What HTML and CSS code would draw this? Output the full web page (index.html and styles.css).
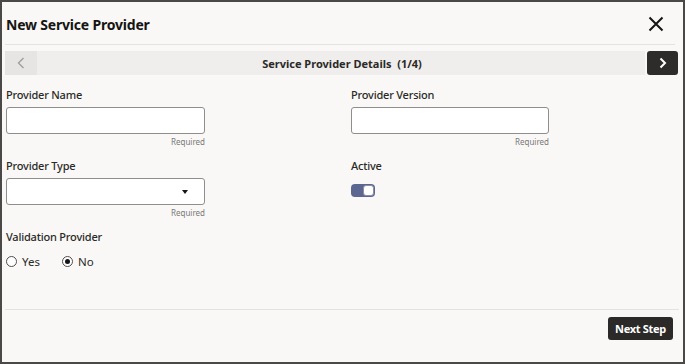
FILE: index.html
```html
<!DOCTYPE html>
<html>
<head>
<meta charset="utf-8">
<title>New Service Provider</title>
<link rel="stylesheet" href="styles.css">
</head>
<body>
<div class="dialog">
	<div class="header">
		<h1 class="title">New Service Provider</h1>
		<a class="close" href="javascript:;">
			<svg width="16" height="16" viewBox="0 0 16 16"><path d="M1.5 1.5L14.5 14.5M14.5 1.5L1.5 14.5" stroke="#161513" stroke-width="2" fill="none"/></svg>
		</a>
	</div>
	<div class="train">
		<div class="bar">
			<a class="prev" href="javascript:;">
				<svg width="8" height="12" viewBox="0 0 8 12"><path d="M6.5 1L1.5 6L6.5 11" stroke="#a09f9d" stroke-width="1.4" fill="none"/></svg>
			</a>
			<div class="step">Service Provider Details&nbsp; (1/4)</div>
		</div>
		<a class="next" href="javascript:;">
			<svg width="8" height="12" viewBox="0 0 8 12"><path d="M1.5 1.5L6 6L1.5 10.5" stroke="#fff" stroke-width="2" fill="none"/></svg>
		</a>
	</div>
	<div class="form">
		<div class="field">
			<label>Provider Name</label>
			<div class="input"></div>
			<div class="hint">Required</div>
		</div>
		<div class="field">
			<label>Provider Version</label>
			<div class="input"></div>
			<div class="hint">Required</div>
		</div>
		<div class="field">
			<label>Provider Type</label>
			<div class="input select"><span class="caret"></span></div>
			<div class="hint">Required</div>
		</div>
		<div class="field">
			<label>Active</label>
			<div class="switch"><span class="knob"></span></div>
		</div>
		<div class="field">
			<label>Validation Provider</label>
			<div class="radios">
				<span class="radio"><i></i>Yes</span>
				<span class="radio on"><i></i>No</span>
			</div>
		</div>
	</div>
	<div class="footer">
		<a class="btn" href="javascript:;">Next Step</a>
	</div>
</div>
</body>
</html>
```

FILE: styles.css
```css
*{margin:0; padding:0; box-sizing:border-box;}
body{font-family:"Noto Sans", "Open Sans", sans-serif; color:#161513; background:#fff;}
a{text-decoration:none; color:inherit;}

.dialog{width:685px; height:364px; border:2px solid #4a4947; background:#f9f8f6; padding-left:3px; display:flex; flex-direction:column;}

.header{height:43px; margin-right:8px; border-bottom:1px solid #e4e3e1; display:flex; align-items:center; justify-content:space-between; padding:0 11px 0 1px;}
.title{font-size:14px; font-weight:700; letter-spacing:-0.2px; color:#161513; padding-top:2px;}
.close{display:flex; padding-top:1px;}

.train{margin:6px 5px 0 0; height:24px; display:flex; align-items:center;}
.train .bar{flex:1; height:24px; display:flex; align-items:center; background:#efeeec;}
.train .prev{width:32px; height:24px; background:#e6e5e3; display:flex; align-items:center; justify-content:center;}
.train .step{flex:1; text-align:center; font-size:11px; font-weight:700; color:#2b2a28; padding-left:2px;}
.train .next{width:31px; height:24px; margin-left:2px; background:#2d2c2a; border-radius:3px; display:flex; align-items:center; justify-content:center;}

.form{flex:1; display:grid; grid-template-columns:199px 198px; column-gap:146px; row-gap:12px; align-content:start; padding:13px 0 0 1px;}
.field label{display:block; font-size:11px; font-weight:500; line-height:14px; color:#2b2a28; letter-spacing:-0.2px;}
.field .input{margin-top:5px; height:27px; background:#fff; border:1px solid #8f8e8c; border-radius:3px; position:relative;}
.field .hint{margin-top:3px; font-size:8px; line-height:10px; color:#7a7977; text-align:right;}
.select .caret{position:absolute; right:16px; top:11px; border-left:3px solid transparent; border-right:3px solid transparent; border-top:4px solid #161513;}

.switch{margin-top:11px; width:24px; height:13px; border-radius:4px; background:#5b6790; position:relative;}
.switch .knob{position:absolute; right:1px; top:1px; width:11px; height:11px; border-radius:3px; background:#fff; border:1px solid #8a8fa6;}

.radios{margin-top:9px; display:flex; height:16px; align-items:center; font-size:11.5px; color:#2b2a28;}
.radio{display:flex; align-items:center; margin-right:22px;}
.radio i{width:11px; height:11px; border-radius:50%; border:1px solid #4f4e4c; background:#fff; margin-right:5px; position:relative;}
.radio.on i:after{content:""; position:absolute; left:2px; top:2px; width:5px; height:5px; border-radius:50%; background:#161513;}

.footer{height:53px; margin-right:4px; border-top:1px solid #e4e3e1; display:flex; justify-content:flex-end; align-items:flex-start; padding:7px 6px 0 0;}
.btn{width:65px; height:23px; background:#2b2a28; border-radius:3px; color:#fff; font-size:11px; font-weight:700; display:flex; align-items:center; justify-content:center; letter-spacing:-0.3px;}
```
